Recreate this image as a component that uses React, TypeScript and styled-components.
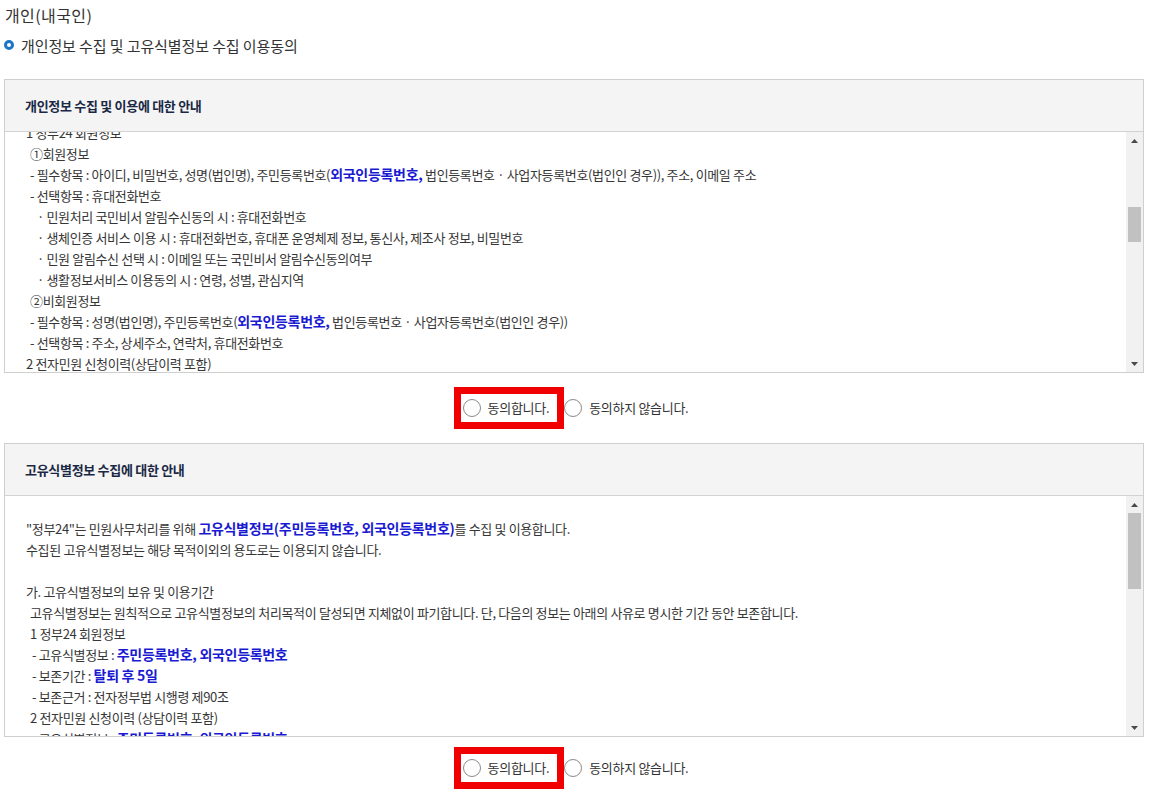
import { ReactNode, useLayoutEffect, useRef, useState } from 'react';
import styled, { createGlobalStyle } from 'styled-components';

type Line = [number, ReactNode];

const GlobalStyle = createGlobalStyle`
  html, body {
    margin: 0;
    padding: 0;
    background: #fff;
  }
  body {
    font-family: 'Noto Sans CJK KR', 'Noto Sans', sans-serif;
    color: #333;
  }
`;

const B = ({ children }: { children: ReactNode }) => <Em>{children}</Em>;

const personalHead: Line[] = [
  [0, '정부24는 회원가입, 민원신청 및 처리 등을 위해 아래와 같이 개인정보를 수집·이용합니다.'],
  [0, ''],
  [0, '가. 개인정보의 수집·이용 목적'],
  [4, '- 회원가입 : 회원제 서비스 이용에 따른 본인확인, 개인식별, 가입의사 확인, 불량회원의 부정이용 방지'],
  [4, '- 민원사무 처리 : 민원신청, 민원처리 결과 안내, 민원 상담 및 처리상황 통지'],
  [4, '- 국민비서 서비스 : 생활정보 알림, 민원처리 결과 알림 등 맞춤형 정보 제공'],
  [4, '- 생체인증 서비스 : 지문, 얼굴 등 생체정보를 이용한 간편 로그인 제공'],
  [4, '- 통계 및 서비스 개선 : 서비스 이용 통계 분석, 신규 서비스 개발'],
  [0, ''],
  [0, '나. 수집하는 개인정보의 항목'],
  [4, '정부24는 회원가입, 민원신청 등을 위해 아래와 같은 개인정보를 수집하고 있습니다.'],
  [4, '※ 민원의 종류에 따라 추가로 수집되는 항목은 각 민원신청서에서 별도로 안내합니다.'],
  [0, ''],
  [0, '1 수집방법'],
  [4, '- 홈페이지 회원가입 및 민원신청 화면을 통한 정보주체의 직접 입력'],
  [4, '- 행정정보 공동이용을 통한 확인(정보주체의 동의가 있는 경우)'],
  [0, ''],
];

const personalLines: Line[] = [
  [0, '1 정부24 회원정보'],
  [4, '①회원정보'],
  [
    4,
    <>
      - 필수항목 : 아이디, 비밀번호, 성명(법인명), 주민등록번호(<B>외국인등록번호,</B> 법인등록번호 · 사업자등록번호(법인인 경우)), 주소, 이메일 주소
    </>,
  ],
  [4, '- 선택항목 : 휴대전화번호'],
  [11, '· 민원처리 국민비서 알림수신동의 시 : 휴대전화번호'],
  [11, '· 생체인증 서비스 이용 시 : 휴대전화번호, 휴대폰 운영체제 정보, 통신사, 제조사 정보, 비밀번호'],
  [11, '· 민원 알림수신 선택 시 : 이메일 또는 국민비서 알림수신동의여부'],
  [11, '· 생활정보서비스 이용동의 시 : 연령, 성별, 관심지역'],
  [4, '②비회원정보'],
  [
    4,
    <>
      - 필수항목 : 성명(법인명), 주민등록번호(<B>외국인등록번호,</B> 법인등록번호 · 사업자등록번호(법인인 경우))
    </>,
  ],
  [4, '- 선택항목 : 주소, 상세주소, 연락처, 휴대전화번호'],
  [0, '2 전자민원 신청이력(상담이력 포함)'],
  [4, '- 필수항목 : 성명(법인명), 주민등록번호(외국인등록번호, 법인등록번호 · 사업자등록번호(법인인 경우)), 주소, 연락처'],
  [4, '- 선택항목 : 이메일 주소, 휴대전화번호'],
  [4, '- 민원 종류에 따라 민원신청서에 기재된 정보'],
  [0, '3 서비스 이용 과정에서 자동으로 생성되어 수집되는 정보'],
  [4, '- 접속 IP 정보, 쿠키, 서비스 이용기록, 접속로그, 이용 단말기 정보'],
  [0, ''],
  [0, '다. 개인정보의 보유 및 이용기간'],
  [4, '개인정보는 원칙적으로 개인정보의 처리목적이 달성되면 지체없이 파기합니다. 단, 다음의 정보는 아래의 사유로 명시한 기간 동안 보존합니다.'],
  [4, '1 정부24 회원정보'],
  [6, '- 보존기간 : 회원탈퇴 시까지'],
  [6, '- 보존근거 : 정보주체의 동의'],
  [4, '2 전자민원 신청이력(상담이력 포함)'],
  [6, '- 보존기간 : 민원 처리에 관한 법률 및 공공기록물 관리에 관한 법률에서 정한 기간'],
  [6, '- 보존근거 : 민원 처리에 관한 법률 시행령 제8조, 공공기록물 관리에 관한 법률 시행령 제26조'],
  [4, '3 서비스 이용기록'],
  [6, '- 보존기간 : 3개월'],
  [6, '- 보존근거 : 통신비밀보호법'],
  [0, ''],
  [0, '라. 동의를 거부할 권리가 있다는 사실 및 동의 거부에 따른 불이익 내용'],
  [4, '정보주체는 개인정보 수집 및 이용에 대한 동의를 거부할 권리가 있습니다.'],
  [4, '다만, 필수항목의 수집 및 이용에 동의하지 않으실 경우 회원가입 및 전자민원 서비스 이용이 제한될 수 있습니다.'],
  [4, '선택항목의 수집 및 이용에 동의하지 않으셔도 정부24 서비스 이용에는 제한이 없습니다.'],
  [0, ''],
  [0, '마. 개인정보의 제3자 제공'],
  [4, '정부24는 정보주체의 개인정보를 수집·이용 목적으로 명시한 범위 내에서 처리하며, 정보주체의 동의, 법률의 특별한 규정 등'],
  [4, '개인정보 보호법 제17조 및 제18조에 해당하는 경우에만 개인정보를 제3자에게 제공합니다.'],
  [6, '- 제공받는 자 : 민원 처리기관(중앙행정기관, 지방자치단체, 공공기관 등)'],
  [6, '- 제공 목적 : 민원사무의 접수, 처리 및 결과 통지'],
  [6, '- 보유 및 이용기간 : 민원사무 처리 완료 시까지'],
  [0, ''],
  [0, '바. 개인정보 처리의 위탁'],
  [4, '정부24는 원활한 개인정보 업무처리를 위하여 다음과 같이 개인정보 처리업무를 위탁하고 있습니다.'],
  [6, '- 수탁업체 : 한국지역정보개발원'],
  [0, ''],
  [4, '※ 자세한 사항은 정부24 개인정보처리방침을 참고하시기 바랍니다.'],
];

const uniqueLines: Line[] = [
  [
    0,
    <>
      "정부24"는 민원사무처리를 위해 <B>고유식별정보(주민등록번호, 외국인등록번호)</B>를 수집 및 이용합니다.
    </>,
  ],
  [0, '수집된 고유식별정보는 해당 목적이외의 용도로는 이용되지 않습니다.'],
  [0, ''],
  [0, '가. 고유식별정보의 보유 및 이용기간'],
  [4, '고유식별정보는 원칙적으로 고유식별정보의 처리목적이 달성되면 지체없이 파기합니다. 단, 다음의 정보는 아래의 사유로 명시한 기간 동안 보존합니다.'],
  [4, '1 정부24 회원정보'],
  [
    6,
    <>
      - 고유식별정보 : <B>주민등록번호, 외국인등록번호</B>
    </>,
  ],
  [
    6,
    <>
      - 보존기간 : <B>탈퇴 후 5일</B>
    </>,
  ],
  [6, '- 보존근거 : 전자정부법 시행령 제90조'],
  [4, '2 전자민원 신청이력 (상담이력 포함)'],
  [
    6,
    <>
      - 고유식별정보 : <B>주민등록번호, 외국인등록번호</B>
    </>,
  ],
  [
    6,
    <>
      - 보존기간 : <B>민원사무 처리 완료 후 관련 법령에서 정한 기간</B>
    </>,
  ],
  [6, '- 보존근거 : 민원 처리에 관한 법률 시행령 제58조'],
  [4, '3 비회원 민원신청 정보'],
  [
    6,
    <>
      - 고유식별정보 : <B>주민등록번호, 외국인등록번호</B>
    </>,
  ],
  [6, '- 보존기간 : 민원사무 처리 완료 시까지'],
  [6, '- 보존근거 : 민원 처리에 관한 법률 시행령 제58조'],
  [0, ''],
  [0, '나. 동의를 거부할 권리가 있다는 사실 및 동의 거부에 따른 불이익 내용'],
  [4, '정보주체는 고유식별정보 수집 및 이용에 대한 동의를 거부할 권리가 있습니다.'],
  [4, '다만, 동의하지 않으실 경우 회원가입 및 전자민원 서비스 이용이 제한될 수 있습니다.'],
  [0, ''],
  [0, '다. 고유식별정보의 처리 근거'],
  [6, '- 전자정부법 시행령 제90조(고유식별정보의 처리)'],
  [6, '- 민원 처리에 관한 법률 시행령 제58조(고유식별정보의 처리)'],
  [6, '- 주민등록법 시행령 제51조(민감정보 및 고유식별정보의 처리)'],
  [0, ''],
  [4, '※ 고유식별정보는 암호화하여 안전하게 저장·관리됩니다.'],
  [4, '※ 자세한 사항은 정부24 개인정보처리방침을 참고하시기 바랍니다.'],
];

const renderLines = (lines: Line[]) =>
  lines.map(([indent, text], i) => (
    <TextLine key={i} $indent={indent}>
      {text === '' ? '\u00a0' : text}
    </TextLine>
  ));

const ARROW = 17;

type TermsPanelProps = {
  title: string;
  head?: Line[];
  lines: Line[];
};

// 헤드리스 브라우저는 스크롤바를 숨기므로 직접 그린다
const TermsPanel = ({ title, head, lines }: TermsPanelProps) => {
  const bodyRef = useRef<HTMLDivElement>(null);
  const anchorRef = useRef<HTMLDivElement>(null);
  const [thumb, setThumb] = useState({ top: 0, height: 40 });

  useLayoutEffect(() => {
    const body = bodyRef.current;
    if (!body) return;
    if (head && anchorRef.current) {
      body.scrollTop = anchorRef.current.offsetTop + 10;
    }
    const track = body.clientHeight - ARROW * 2;
    const height = Math.max(17, (track * body.clientHeight) / body.scrollHeight);
    const max = body.scrollHeight - body.clientHeight;
    const top = max > 0 ? ((track - height) * body.scrollTop) / max : 0;
    setThumb({ top, height });
  }, [head]);

  return (
    <TermsBox>
      <TermsHeader>{title}</TermsHeader>
      <TermsBody>
        <ScrollContent ref={bodyRef}>
          {head && renderLines(head)}
          <div ref={anchorRef}>{renderLines(lines)}</div>
        </ScrollContent>
        <ScrollBar>
          <ScrollArrow>
            <svg width="7" height="4" viewBox="0 0 7 4">
              <path d="M0 4 L3.5 0 L7 4 Z" fill="#4a4a4a" />
            </svg>
          </ScrollArrow>
          <ScrollTrack>
            <ScrollThumb style={{ marginTop: thumb.top, height: thumb.height }} />
          </ScrollTrack>
          <ScrollArrow>
            <svg width="7" height="4" viewBox="0 0 7 4">
              <path d="M0 0 L3.5 4 L7 0 Z" fill="#4a4a4a" />
            </svg>
          </ScrollArrow>
        </ScrollBar>
      </TermsBody>
    </TermsBox>
  );
};

type AgreeProps = {
  name: string;
  gap: number;
};

const AgreeRow = ({ name, gap }: AgreeProps) => (
  <RadioRow $gap={gap}>
    <Marked>
      <RadioLabel>
        <RadioInput type="radio" name={name} />
        동의합니다.
      </RadioLabel>
    </Marked>
    <RadioLabel>
      <RadioInput type="radio" name={name} />
      동의하지 않습니다.
    </RadioLabel>
  </RadioRow>
);

const App = () => {
  return (
    <Page>
      <GlobalStyle />
      <PageTitle>개인(내국인)</PageTitle>
      <SubTitle>
        <Bullet />
        개인정보 수집 및 고유식별정보 수집 이용동의
      </SubTitle>

      <TermsPanel title="개인정보 수집 및 이용에 대한 안내" head={personalHead} lines={personalLines} />
      <AgreeRow name="agree1" gap={14} />

      <TermsPanel title="고유식별정보 수집에 대한 안내" lines={uniqueLines} />
      <AgreeRow name="agree2" gap={10} />
    </Page>
  );
};

const Page = styled.div`
  width: 1140px;
  margin-left: 4px;
  padding-top: 3px;
`;

const PageTitle = styled.h2`
  margin: 0 0 0 1px;
  font-size: 16px;
  font-weight: 400;
  line-height: 24px;
  letter-spacing: 0.4px;
  color: #333;
`;

const SubTitle = styled.div`
  display: flex;
  align-items: center;
  gap: 7px;
  margin-top: 9px;
  margin-bottom: 23px;
  font-size: 15px;
  line-height: 20px;
  letter-spacing: -0.1px;
  color: #333;
`;

const Bullet = styled.span`
  display: inline-block;
  box-sizing: border-box;
  width: 10px;
  height: 10px;
  border: 3px solid #1d74c8;
  border-radius: 50%;
  margin-top: -2px;
`;

const TermsBox = styled.div`
  border: 1px solid #cfcfcf;
`;

const TermsHeader = styled.div`
  display: flex;
  align-items: center;
  box-sizing: border-box;
  height: 52px;
  padding-left: 20px;
  background: #f4f4f4;
  border-bottom: 1px solid #d3d3d3;
  font-size: 13px;
  font-weight: 700;
  letter-spacing: -0.3px;
  color: #1a2845;
`;

const TermsBody = styled.div`
  display: flex;
  height: 240px;
`;

const ScrollContent = styled.div`
  position: relative;
  flex: 1;
  min-width: 0;
  overflow: hidden;
  box-sizing: border-box;
  padding: 22px 10px 22px 21px;
  font-size: 13px;
  line-height: 21px;
  letter-spacing: -0.35px;
  color: #363636;
`;

const ScrollBar = styled.div`
  display: flex;
  flex-direction: column;
  width: 17px;
  background: #f1f1f1;
`;

const ScrollArrow = styled.div`
  display: flex;
  align-items: center;
  justify-content: center;
  height: ${ARROW}px;
  flex-shrink: 0;
`;

const ScrollTrack = styled.div`
  flex: 1;
  display: flex;
  flex-direction: column;
  align-items: center;
`;

const ScrollThumb = styled.div`
  width: 13px;
  background: #c1c1c1;
`;

const TextLine = styled.div<{ $indent: number }>`
  padding-left: ${({ $indent }) => $indent}px;
  white-space: nowrap;
`;

const Em = styled.b`
  font-size: 14px;
  font-weight: 700;
  letter-spacing: -0.3px;
  color: #1a1ad2;
`;

const RadioRow = styled.div<{ $gap: number }>`
  display: flex;
  justify-content: center;
  align-items: center;
  padding: ${({ $gap }) => $gap}px 6px 14px 0;
`;

const Marked = styled.div`
  border: 7px solid #f00000;
  padding: 4px 8px 4px 2px;
`;

const RadioLabel = styled.label`
  display: flex;
  align-items: center;
  gap: 7px;
  font-size: 13px;
  line-height: 20px;
  letter-spacing: -0.3px;
  color: #333;
  cursor: pointer;
`;

const RadioInput = styled.input`
  appearance: none;
  box-sizing: border-box;
  width: 18px;
  height: 18px;
  margin: 0;
  border: 1px solid #8a8a8a;
  border-radius: 50%;
  background: #fff;
  cursor: pointer;

  &:checked {
    background: radial-gradient(circle, #333 0 4px, #fff 4.5px);
  }
`;

export default App;
